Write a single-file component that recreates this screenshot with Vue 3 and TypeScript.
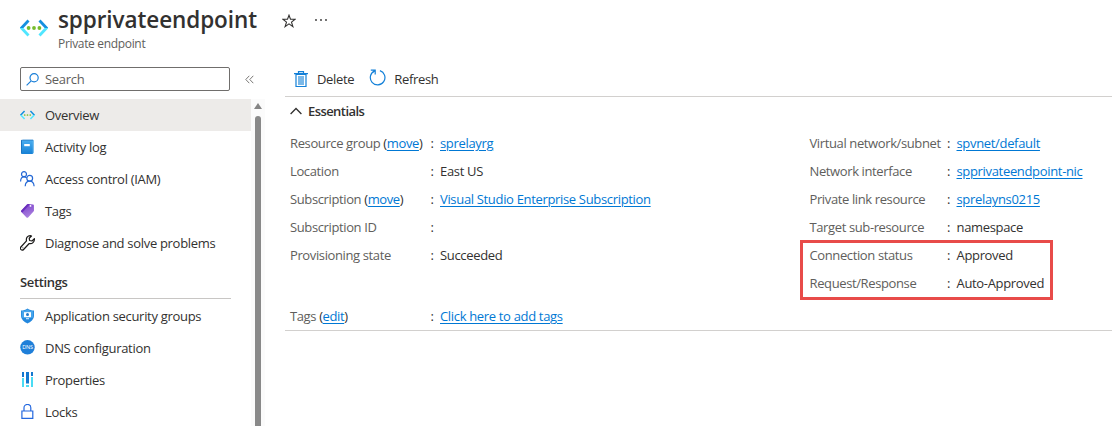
<script setup lang="ts">
interface NavItem {
  label: string
  icon: string
  active?: boolean
}
interface Field {
  label: string
  action?: string
  value: string
  link?: boolean
}

const mainItems: NavItem[] = [
  { label: 'Overview', icon: 'endpoint', active: true },
  { label: 'Activity log', icon: 'log' },
  { label: 'Access control (IAM)', icon: 'people' },
  { label: 'Tags', icon: 'tag' },
  { label: 'Diagnose and solve problems', icon: 'wrench' },
]
const settingsItems: NavItem[] = [
  { label: 'Application security groups', icon: 'shield' },
  { label: 'DNS configuration', icon: 'dns' },
  { label: 'Properties', icon: 'properties' },
  { label: 'Locks', icon: 'lock' },
]
const groups = [
  { title: '', items: mainItems },
  { title: 'Settings', items: settingsItems },
]

const leftFields: Field[] = [
  { label: 'Resource group', action: 'move', value: 'sprelayrg', link: true },
  { label: 'Location', value: 'East US' },
  { label: 'Subscription', action: 'move', value: 'Visual Studio Enterprise Subscription', link: true },
  { label: 'Subscription ID', value: '' },
  { label: 'Provisioning state', value: 'Succeeded' },
]
const rightFields: Field[] = [
  { label: 'Virtual network/subnet', value: 'spvnet/default', link: true },
  { label: 'Network interface', value: 'spprivateendpoint-nic', link: true },
  { label: 'Private link resource', value: 'sprelayns0215', link: true },
  { label: 'Target sub-resource', value: 'namespace' },
  { label: 'Connection status', value: 'Approved' },
  { label: 'Request/Response', value: 'Auto-Approved' },
]
const columns = [leftFields, rightFields]
</script>

<template>
  <div class="page">
    <header class="header">
      <svg class="logo" viewBox="0 0 28 18" width="28" height="18">
        <defs>
          <linearGradient id="chev" x1="0" y1="0" x2="0" y2="18" gradientUnits="userSpaceOnUse">
            <stop offset="0.5" stop-color="#1490df" />
            <stop offset="0.5" stop-color="#50e6ff" />
          </linearGradient>
        </defs>
        <path d="M8.500 1.500 1.500 9l7 7.500M19.500 1.500l7 7.500-7 7.500" fill="none" stroke="url(#chev)" stroke-width="2.800" />
        <g fill="#76bc2d"><circle cx="8.600" cy="9" r="1.900" /><circle cx="14" cy="9" r="1.900" /><circle cx="19.400" cy="9" r="1.900" /></g>
      </svg>
      <div class="titles">
        <h1>spprivateendpoint</h1>
        <p>Private endpoint</p>
      </div>
      <svg class="star" viewBox="0 0 14 14" width="14" height="14">
        <path d="M7 1.200 8.500 5.300h4.600L9.500 8.100l1.400 4.500L7 9.900l-3.900 2.700 1.400-4.500L.9 5.300h4.600z" fill="none" stroke="#323130" stroke-width="1.100" />
      </svg>
      <svg class="more" viewBox="0 0 12 4" width="12" height="4" fill="#323130">
        <circle cx="1" cy="2" r=".9" /><circle cx="6" cy="2" r=".9" /><circle cx="11" cy="2" r=".9" />
      </svg>
    </header>

    <div class="body">
      <aside class="sidebar">
        <div class="search-row">
          <div class="search">
            <svg viewBox="0 0 13 13" width="13" height="13"><path d="M.6 12.400 5.200 7.800M12.200 4.800a4.100 4.100 0 1 1-8.200 0 4.100 4.100 0 0 1 8.200 0z" fill="none" stroke="#1a7fd8" stroke-width="1.200" /></svg>
            <span>Search</span>
          </div>
          <svg class="collapse" viewBox="0 0 9 9" width="9" height="9"><path d="M4.300.8.800 4.500l3.500 3.700M8.300.8 4.800 4.500l3.500 3.700" fill="none" stroke="#797775" /></svg>
        </div>
        <div class="menu">
          <nav class="nav">
            <section v-for="group in groups" :key="group.title">
              <h2 v-if="group.title">{{ group.title }}</h2>
              <div v-for="item in group.items" :key="item.label" class="item" :class="{ active: item.active }">
                <svg v-if="item.icon === 'endpoint'" viewBox="0 0 28 18" width="15" height="10">
                  <path d="M8.500 1.500 1.500 9l7 7.500M19.500 1.500l7 7.500-7 7.500" fill="none" stroke="url(#chev)" stroke-width="2.800" />
                  <g fill="#76bc2d"><circle cx="8.800" cy="9" r="1.600" /><circle cx="14" cy="9" r="1.600" /><circle cx="19.200" cy="9" r="1.600" /></g>
                </svg>
                <svg v-else-if="item.icon === 'log'" viewBox="0 0 15 16" width="15" height="16">
                  <defs><linearGradient id="book" x2="0" y2="1"><stop stop-color="#4aaef0" /><stop offset="1" stop-color="#1681d5" /></linearGradient></defs>
                  <path d="M3 .8h10a1 1 0 0 1 1 1v11.700a1 1 0 0 1-1 1H3z" fill="#7cc0ee" />
                  <path d="M2 1.300h10.800V15H2a1 1 0 0 1-1-1V2.300a1 1 0 0 1 1-1z" fill="url(#book)" />
                  <path d="M1 1.800a1 1 0 0 1 1-1h11v.6H2.500q-.5 0-.5.600v12.500a1 1 0 0 1-1-1z" fill="#1c76c2" />
                  <path d="M4.200 5h5.600v2.200H4.200z" fill="#fff" />
                </svg>
                <svg v-else-if="item.icon === 'people'" viewBox="0 0 15 16" width="15" height="16" fill="none" stroke="#2468d5" stroke-width="1.200">
                  <circle cx="4" cy="3.200" r="2.500" /><path d="M.6 10.500c0-3.200 1.500-4.700 3.400-4.700 1.100 0 2 .4 2.600 1.100" />
                  <circle cx="9.700" cy="7.200" r="2.900" /><path d="M5.200 15.300c.1-3.300 2-5.200 4.500-5.200s4.200 1.900 4.400 5.200" />
                </svg>
                <svg v-else-if="item.icon === 'tag'" viewBox="0 0 15 16" width="15" height="16">
                  <defs><linearGradient id="purple" x1=".2" x2=".6" y2="1"><stop stop-color="#7b3fcb" /><stop offset="1" stop-color="#ab83df" /></linearGradient></defs>
                  <path d="M1.300 7.400 7 1.600Q7.400 1 8.200 1l4.800.5q.9.100.9.900l.1 5q0 .6-.5 1.100l-5.400 5.900q-.8.700-1.600 0L1.300 9.100q-.8-.8 0-1.700z" fill="url(#purple)" />
                  <path d="M1.300 7.400 7 1.600Q7.400 1 8.200 1l1.600.2L2.300 9.600 1.300 8.800q-.6-.7 0-1.400z" fill="#6b2fbd" />
                  <circle cx="10.500" cy="2.900" r=".9" fill="#fff" />
                </svg>
                <svg v-else-if="item.icon === 'wrench'" viewBox="0 0 15 16" width="15" height="16">
                  <path d="M10.300.7C7.600.7 5.800 3 6.500 5.900L.9 12a1.800 1.800 0 0 0 2.700 2.500l5.600-6c2.900.8 5.500-1.500 5.200-4.900L12 6 9.600 5.500 9.200 3.200l2.300-2.200z" fill="none" stroke="#1b1a19" stroke-width="1.200" stroke-linejoin="round" />
                  <circle cx="2.900" cy="12.700" r=".5" fill="#1b1a19" />
                </svg>
                <svg v-else-if="item.icon === 'shield'" viewBox="0 0 15 16" width="15" height="16">
                  <path d="M7.500.5c2 1.500 4 2 6.500 2v5c0 4-3.200 6.400-6.500 8C4.200 13.900 1 11.500 1 7.500v-5c2.500 0 4.500-.5 6.500-2z" fill="#2388de" />
                  <path d="M7.500 1.500c1.800 1.200 3.600 1.700 5.700 1.700v4.300q0 1.200-.5 2.200H2.300q-.5-1-.5-2.200V3.200C3.900 3.200 5.700 2.700 7.500 1.500z" fill="#46a5ec" />
                  <path d="M4 4.200h7v5H4z" fill="#fff" /><circle cx="7.500" cy="6.600" r="1.500" fill="#2077ca" /><path d="M6 10.300h3v.9H6z" fill="#fff" />
                </svg>
                <svg v-else-if="item.icon === 'dns'" class="dns" viewBox="0 0 15 16" width="15" height="16">
                  <circle cx="7.500" cy="7.300" r="7.200" fill="#1f7fd9" />
                  <text x="7.500" y="9.400" text-anchor="middle">DNS</text>
                </svg>
                <svg v-else-if="item.icon === 'properties'" viewBox="0 0 15 16" width="15" height="16">
                  <path d="M2 0h2v5H2zM6 0h3v11.500H6zM11 0h2v4h-2z" fill="#1478d0" />
                  <path d="M2 6h2v9H2zM6 13h3v2H6zM11 5h2v10h-2z" fill="#4adcf4" />
                </svg>
                <svg v-else viewBox="0 0 15 16" width="15" height="16" fill="none" stroke="#2468df" stroke-width="1.200">
                  <path d="M1.900 7h10.900v7.400H1.900zM4 7V3.800a3.400 3.400 0 0 1 6.800 0V7" />
                </svg>
                <span>{{ item.label }}</span>
              </div>
            </section>
          </nav>
          <div class="scrollbar">
            <i class="arrow"></i>
            <i class="thumb"></i>
          </div>
        </div>
      </aside>

      <main class="content">
        <div class="toolbar">
          <svg viewBox="0 0 14 17" width="14" height="17">
            <path d="M2 3.500h10v12H2z" fill="#fff" stroke="#1380d8" stroke-width="1.200" />
            <path d="M4 5h6v9H4z" fill="#7ab8e8" />
            <path d="M0 2.700h14M4.500 2.500V.7h5v1.800" fill="none" stroke="#1380d8" stroke-width="1.200" />
          </svg>
          <span class="delete">Delete</span>
          <svg class="refresh" viewBox="0 0 17 17" width="17" height="17">
            <path d="M10.900 1.600a7.300 7.300 0 1 1-5.300.3M1.800 1.200h4.400v4.300M6.200 1.200 3.500 3.800" fill="none" stroke="#1380d8" stroke-width="1.200" />
          </svg>
          <span>Refresh</span>
        </div>
        <div class="essentials">
          <div class="heading">
            <svg viewBox="0 0 12 8" width="12" height="8"><path d="M.6 7 6 1.500 11.400 7" fill="none" stroke="#323130" stroke-width="1.300" /></svg>
            <h2>Essentials</h2>
          </div>
          <div class="columns">
            <dl v-for="(fields, index) in columns" :key="index">
              <div v-for="field in fields" :key="field.label" class="field">
                <dt>{{ field.label }}<template v-if="field.action">{{ ' ' }}<b>(</b><a>{{ field.action }}</a><b>)</b></template></dt>
                <span class="colon">:</span>
                <dd><a v-if="field.link">{{ field.value }}</a><template v-else>{{ field.value }}</template></dd>
              </div>
              <div v-if="index === 1" class="highlight"></div>
            </dl>
          </div>
          <div class="field tags">
            <dt>Tags <b>(</b><a>edit</a><b>)</b></dt>
            <span class="colon">:</span>
            <dd><a>Click here to add tags</a></dd>
          </div>
        </div>
      </main>
    </div>
  </div>
</template>

<style>
body { background: #fff; }
</style>

<style scoped>
* { box-sizing: border-box; }
.page { width: 1112px; height: 426px; overflow: hidden; color: #323130; font: 13px/20px "Open Sans", "Noto Sans", sans-serif; letter-spacing: -0.33px; white-space: nowrap; }
svg { display: block; flex: none; }
h1, h2, p, dl, dt, dd { margin: 0; }
.header { height: 62px; display: flex; padding-left: 20px; }
.logo { margin-top: 19px; }
.titles { width: 200px; margin-left: 10px; }
h1 { font-size: 22.500px; line-height: 30px; font-weight: 600; margin-top: 5px; letter-spacing: -0.08px; }
.titles p { font-size: 12px; line-height: 16px; margin-top: 1px; color: #605e5c; letter-spacing: -0.33px; }
.star { margin: 14px 0 0 24px; }
.more { margin: 18px 0 0 19px; }
.body { display: flex; height: 364px; }
.sidebar { width: 265px; flex: none; letter-spacing: -0.3px; }
.search-row { display: flex; height: 43px; padding: 5px 0 0 20px; }
.search { width: 210px; height: 24px; border: 1px solid #706e6c; border-radius: 2px; display: flex; align-items: center; padding-left: 5px; color: #605e5c; }
.search span { margin-left: 6px; }
.collapse { margin: 8px 0 0 15px; }
.menu { display: flex; margin-top: -6px; height: 327px; }
.nav { width: 251px; }
.item { height: 32px; padding-left: 20px; display: flex; align-items: center; }
.item.active { background: #edebe9; }
.item span { margin-left: 10px; }
.nav h2 { font-size: 13px; font-weight: 600; line-height: 20px; height: 26px; margin: 14px 20px 1px; border-bottom: 1px solid #c8c6c4; width: 211px; letter-spacing: -0.35px; margin-top: 13px; height: 27px; }
.dns text { fill: #fff; font: 5.500px "Open Sans", sans-serif; letter-spacing: -0.2px; }
.scrollbar { width: 14px; background: #fbfbfb; display: flex; flex-direction: column; align-items: center; }
.arrow { border: 4px solid transparent; border-top: 0; border-bottom: 6px solid #858585; margin-top: 4px; }
.thumb { width: 6px; flex: 1; background: #898989; margin-top: 7px; border-radius: 3px 3px 0 0; }
.content { flex: 1; padding-left: 20px; }
.toolbar { height: 35px; border-bottom: 1px solid #d2d0ce; display: flex; align-items: center; padding-left: 9px; }
.toolbar span { margin-left: 9px; }
.toolbar .refresh { margin: -4px 0 0 15px; }
.toolbar .refresh + span { margin-left: 8px; }
.essentials { height: 234px; border-bottom: 1px solid #d2d0ce; padding-left: 5px; }
.heading { display: flex; align-items: center; height: 29px; }
.heading svg { margin-top: -1px; }
.heading h2 { font-size: 13px; font-weight: 600; margin: -2px 0 0 6px; letter-spacing: -0.57px; }
.columns { display: grid; grid-template-columns: 519.500px 1fr; height: 176px; padding-top: 3px; }
dl { position: relative; }
.field { display: flex; height: 28px; align-items: center; }
.field dt { width: 140.500px; color: #605e5c; letter-spacing: -0.38px; }
.columns dl:nth-child(2) dt { width: 137.500px; }
.colon { width: 9.500px; }
b { font-weight: 400; color: #323130; }
a { color: #0078d4; text-decoration: underline; text-underline-offset: 2px; text-decoration-thickness: 1px; }
.highlight { position: absolute; left: -9.500px; top: 111px; width: 253px; height: 60px; border: 3px solid #e84b49; }
</style>
